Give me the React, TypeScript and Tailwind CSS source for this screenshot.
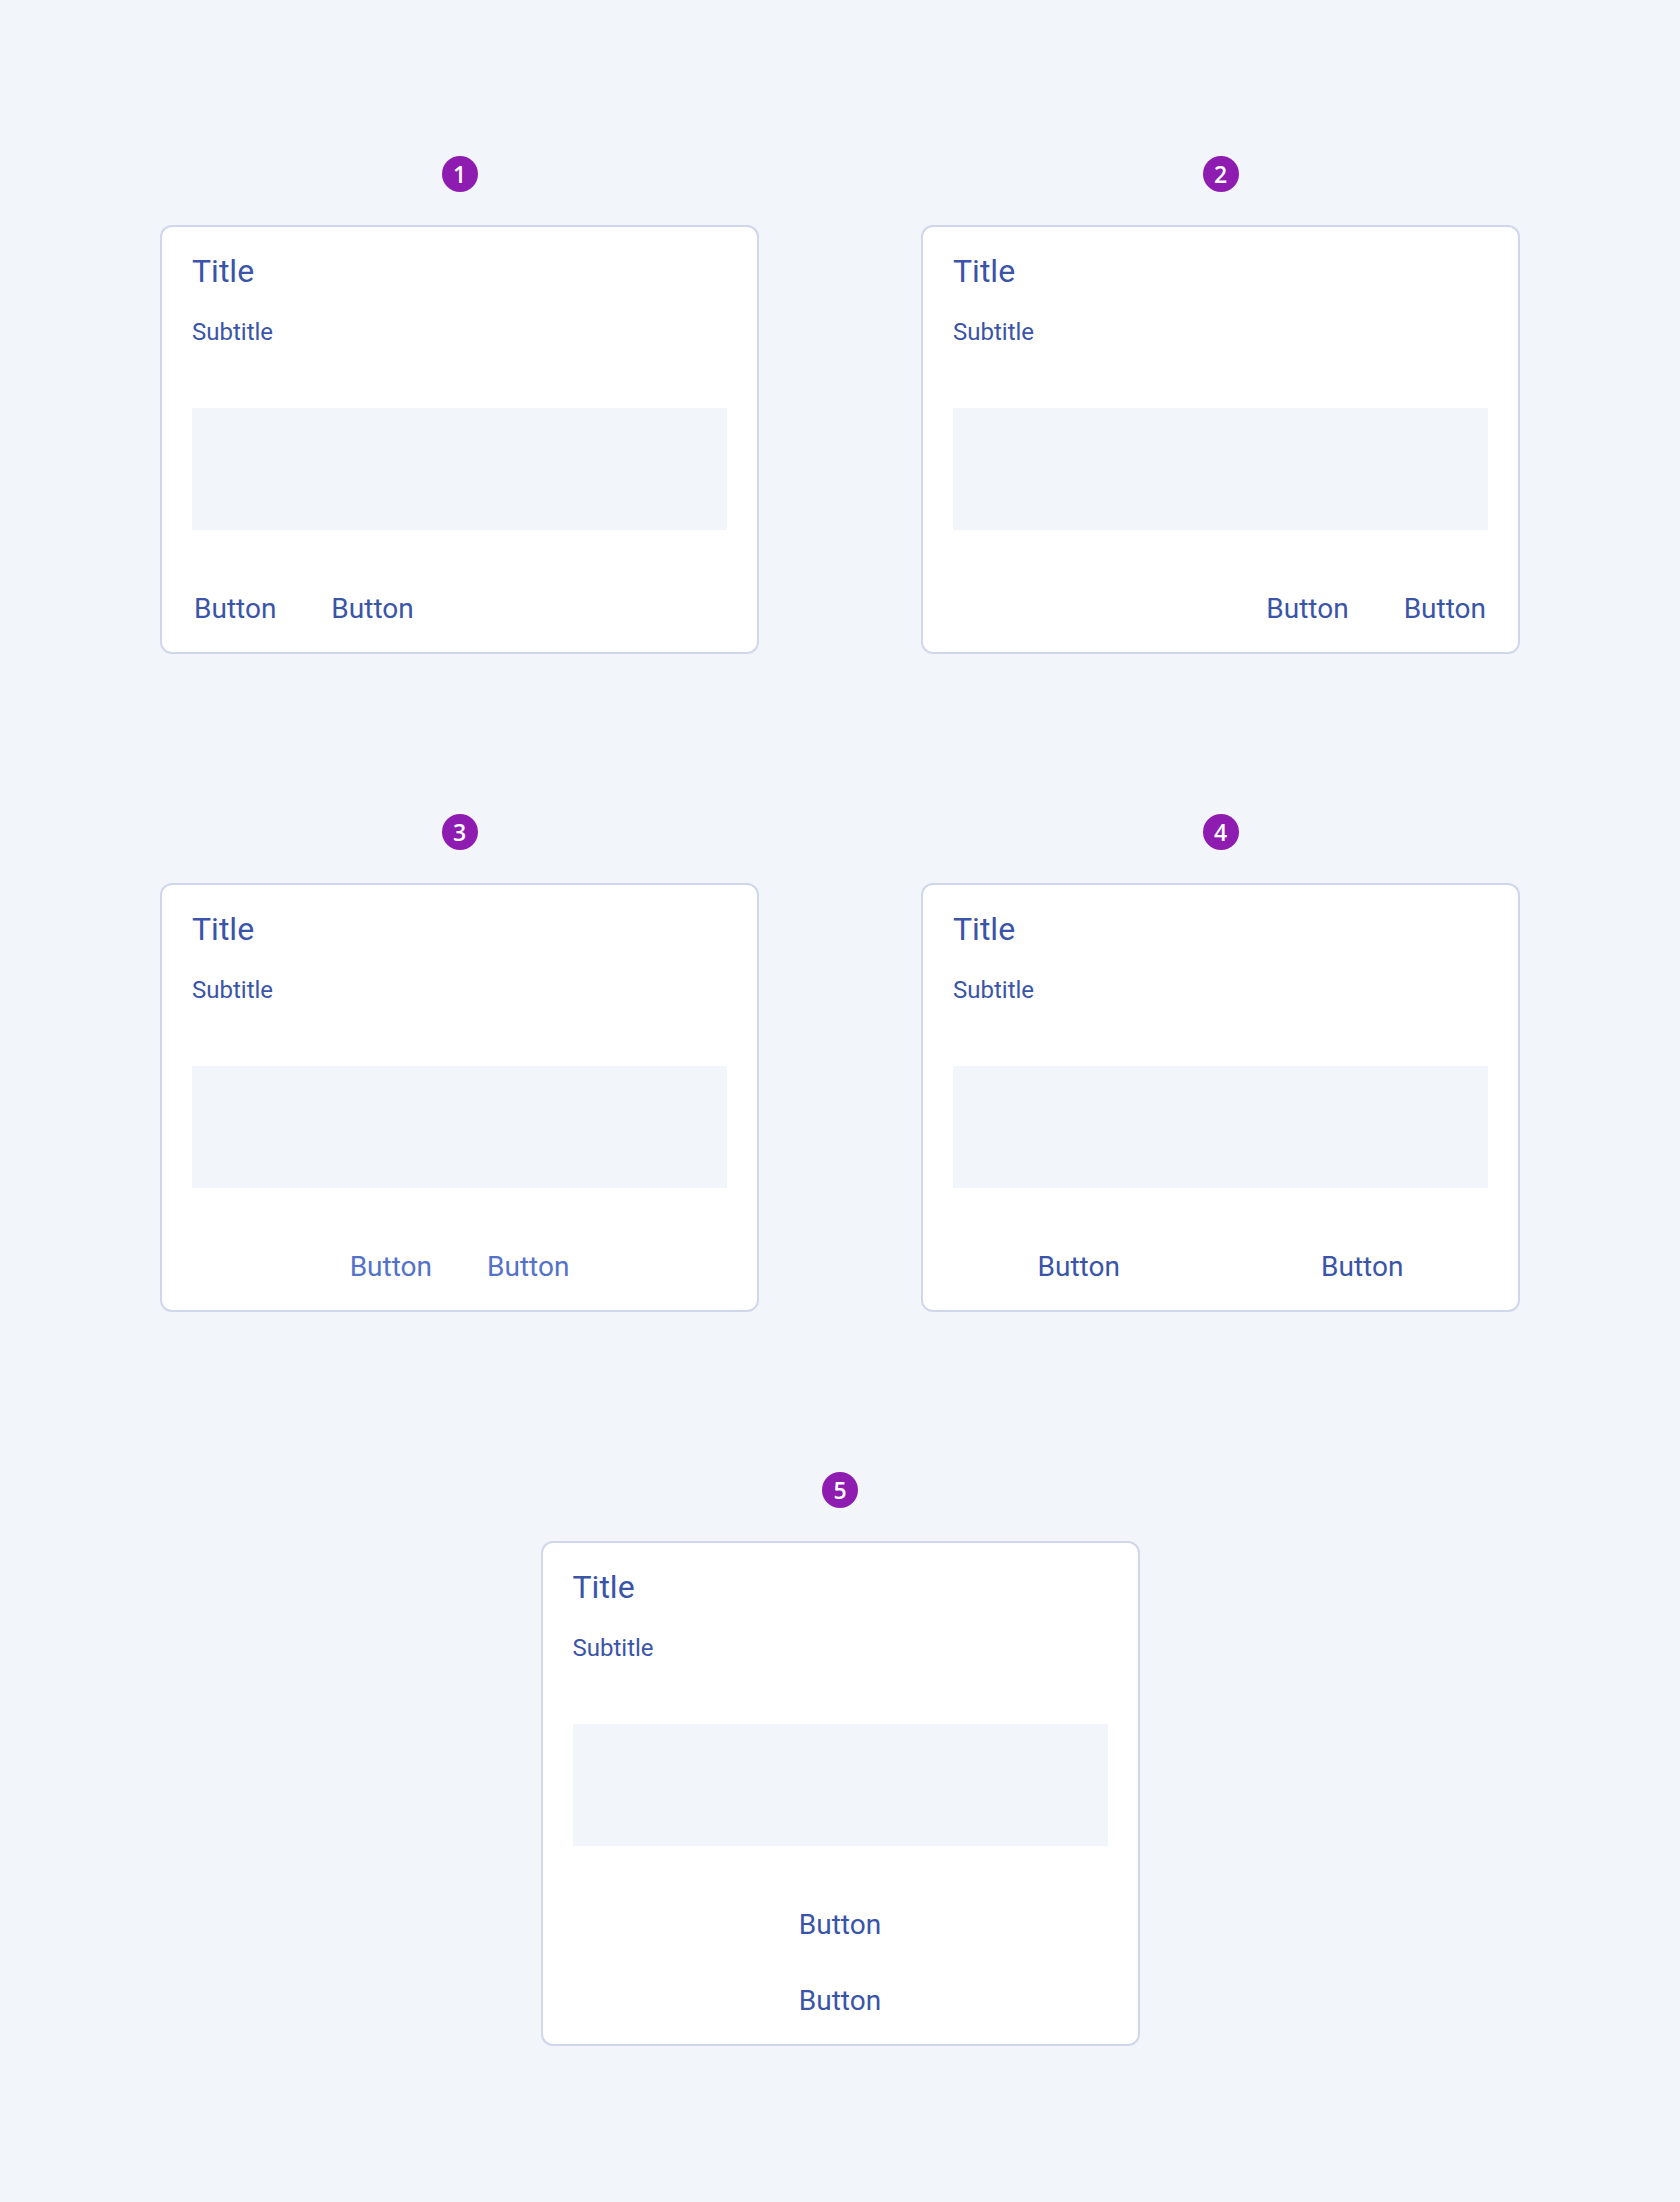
import React from 'react';

type Layout = 'start' | 'end' | 'center' | 'split' | 'stack';

interface CardSpec {
    index: number;
    layout: Layout;
}

const cards: CardSpec[] = [
    { index: 1, layout: 'start' },
    { index: 2, layout: 'end' },
    { index: 3, layout: 'center' },
    { index: 4, layout: 'split' },
];

const font = { fontFamily: 'Roboto, "Noto Sans", sans-serif' };

function Badge({ n }: { n: number }) {
    return (
        <div
            className="w-9 h-9 rounded-full bg-[#8f1cb0] text-white flex items-center justify-center text-[23px] font-semibold leading-none"
            style={{ fontFamily: '"Open Sans", "Noto Sans", sans-serif' }}
        >
            {n}
        </div>
    );
}

function CardButton({ muted }: { muted?: boolean }) {
    return (
        <button
            className={`px-[2px] text-[28px] leading-9 ${muted ? 'text-[#5472c8]' : 'text-[#3a54a8]'}`}
        >
            Button
        </button>
    );
}

function Actions({ layout }: { layout: Layout }) {
    if (layout === 'split') {
        return (
            <div className="mt-[61px] grid grid-cols-2 gap-8 text-center">
                <div><CardButton /></div>
                <div><CardButton /></div>
            </div>
        );
    }
    if (layout === 'stack') {
        return (
            <div className="mt-[61px] flex flex-col items-center gap-10">
                <CardButton />
                <CardButton />
            </div>
        );
    }
    const justify = layout === 'end' ? 'justify-end' : layout === 'center' ? 'justify-center' : 'justify-start';
    return (
        <div className={`mt-[61px] flex gap-[51px] ${justify}`}>
            <CardButton muted={layout === 'center'} />
            <CardButton muted={layout === 'center'} />
        </div>
    );
}

function Card({ layout }: { layout: Layout }) {
    return (
        <div className="w-full bg-white border-2 border-[#d0d7ec] rounded-xl px-[30px] pt-6 pb-[25px]" style={font}>
            <h2 className="text-[32px] leading-10 text-[#3a54a8] font-normal">Title</h2>
            <p className="mt-[25px] text-[24px] leading-8 text-[#3a54a8]">Subtitle</p>
            <div className="mt-[60px] h-[122px] bg-[#f2f5fa]" />
            <Actions layout={layout} />
        </div>
    );
}

function Example({ spec }: { spec: CardSpec }) {
    return (
        <div className="flex flex-col items-center gap-[33px]">
            <Badge n={spec.index} />
            <Card layout={spec.layout} />
        </div>
    );
}

export default function App() {
    return (
        <div className="min-h-screen bg-[#f2f5fa] py-[156px] flex flex-col items-center">
            <div className="w-[1360px] grid grid-cols-2 gap-x-[162px] gap-y-[160px]">
                {cards.map((c) => (
                    <Example key={c.index} spec={c} />
                ))}
            </div>
            <div className="w-[599px] mt-[160px]">
                <Example spec={{ index: 5, layout: 'stack' }} />
            </div>
        </div>
    );
}
